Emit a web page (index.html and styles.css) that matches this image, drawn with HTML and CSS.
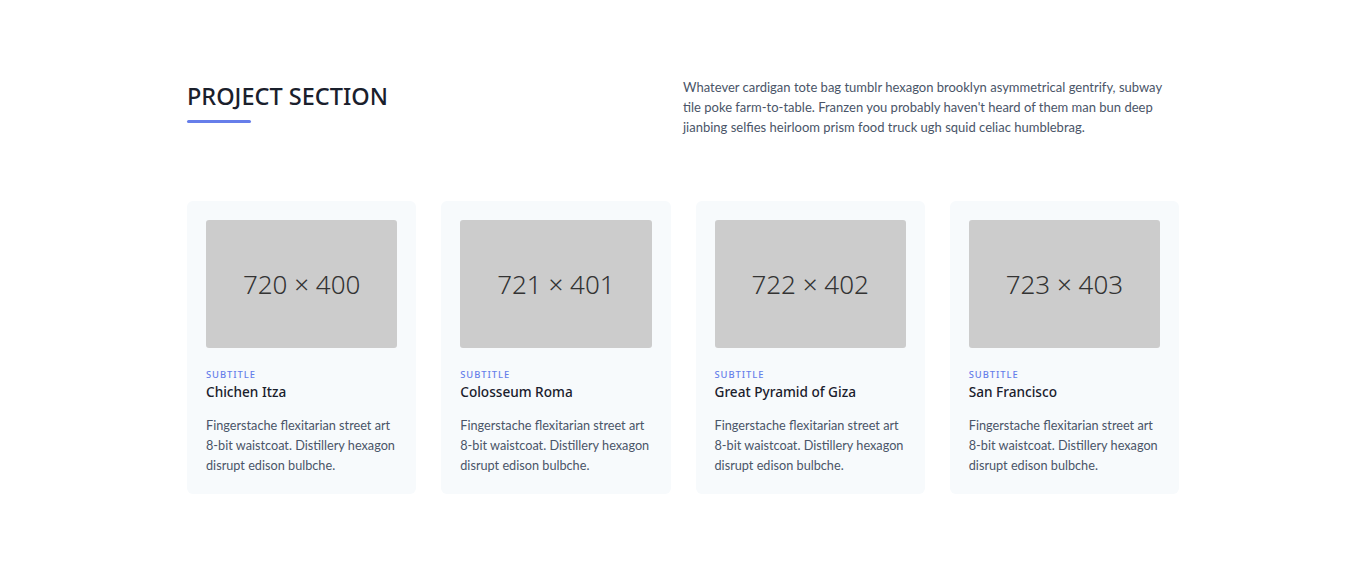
FILE: index.html
```html
<!DOCTYPE html>
<html lang="en">
<head>
<meta charset="utf-8">
<title>Project Section</title>
<link rel="stylesheet" href="styles.css">
</head>
<body>
<section class="section">
  <div class="container">
    <div class="header">
      <div class="title-block">
        <h1 class="title">PROJECT SECTION</h1>
        <div class="underline"></div>
      </div>
      <div class="lead-wrap">
        <p class="lead">Whatever cardigan tote bag tumblr hexagon brooklyn asymmetrical gentrify, subway tile poke farm-to-table. Franzen you probably haven't heard of them man bun deep jianbing selfies heirloom prism food truck ugh squid celiac humblebrag.</p>
      </div>
    </div>
    <div class="cards">
      <div class="card">
        <div class="thumb">720 × 400</div>
        <h3 class="subtitle">SUBTITLE</h3>
        <h2 class="card-title">Chichen Itza</h2>
        <p class="card-text">Fingerstache flexitarian street art 8-bit waistcoat. Distillery hexagon disrupt edison bulbche.</p>
      </div>
      <div class="card">
        <div class="thumb">721 × 401</div>
        <h3 class="subtitle">SUBTITLE</h3>
        <h2 class="card-title">Colosseum Roma</h2>
        <p class="card-text">Fingerstache flexitarian street art 8-bit waistcoat. Distillery hexagon disrupt edison bulbche.</p>
      </div>
      <div class="card">
        <div class="thumb">722 × 402</div>
        <h3 class="subtitle">SUBTITLE</h3>
        <h2 class="card-title">Great Pyramid of Giza</h2>
        <p class="card-text">Fingerstache flexitarian street art 8-bit waistcoat. Distillery hexagon disrupt edison bulbche.</p>
      </div>
      <div class="card">
        <div class="thumb">723 × 403</div>
        <h3 class="subtitle">SUBTITLE</h3>
        <h2 class="card-title">San Francisco</h2>
        <p class="card-text">Fingerstache flexitarian street art 8-bit waistcoat. Distillery hexagon disrupt edison bulbche.</p>
      </div>
    </div>
  </div>
</section>
</body>
</html>
```

FILE: styles.css
```css
* { box-sizing: border-box; }
html, body { margin: 0; padding: 0; background: #fff; }
body {
  font-family: "Lato", "Noto Sans", sans-serif;
  color: #4a5568;
}
.section { padding: 77px 0; }
.container {
  width: 992px;
  margin: 0 auto;
}
.header {
  display: flex;
  justify-content: space-between;
  align-items: flex-start;
  margin-bottom: 64px;
}
.title-block { width: 496px; }
.title {
  margin: 0 0 8px;
  font-family: "Noto Sans", sans-serif;
  font-size: 23.5px;
  line-height: 1.3;
  font-weight: 500;
  color: #1a202c;
  padding-top: 4px;
}
.underline {
  width: 64px;
  height: 3px;
  border-radius: 2px;
  background: #667eea;
}
.lead-wrap { width: 496px; }
.lead {
  width: 482px;
  margin: 0;
  font-size: 13px;
  line-height: 20px;
  color: #4a5568;
}
.cards {
  display: grid;
  grid-template-columns: repeat(4, 1fr);
  gap: 25px;
}
.card {
  background: #f7fafc;
  border-radius: 6px;
  padding: 19px;
}
.thumb {
  height: 128px;
  background: #cccccc;
  border-radius: 3px;
  display: flex;
  align-items: center;
  justify-content: center;
  font-family: "Noto Sans", sans-serif;
  font-size: 26px;
  font-weight: 300;
  color: #333;
  margin-bottom: 20px;
}
.subtitle {
  margin: 0;
  font-family: "Noto Sans", sans-serif;
  font-size: 9.4px;
  line-height: 14px;
  letter-spacing: 0.1em;
  font-weight: 500;
  color: #667eea;
}
.card-title {
  margin: 0 0 13px;
  font-family: "Noto Sans", sans-serif;
  font-size: 13.6px;
  line-height: 20px;
  font-weight: 500;
  color: #1a202c;
}
.card-text {
  margin: 0;
  font-size: 12.7px;
  line-height: 20px;
  color: #4a5568;
}
```
